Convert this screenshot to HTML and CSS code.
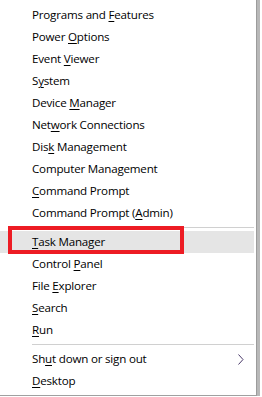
FILE: index.html
```html
<!DOCTYPE html>
<html lang="en">
<head>
    <meta charset="UTF-8">
    <title>Win+X</title>
    <link rel="stylesheet" href="styles.css">
</head>
<body>
    <div class="screen">
        <div class="menu">
            <div class="item">Programs and <u>F</u>eatures</div>
            <div class="item">Power <u>O</u>ptions</div>
            <div class="item">Event <u>V</u>iewer</div>
            <div class="item">S<u>y</u>stem</div>
            <div class="item">Device <u>M</u>anager</div>
            <div class="item">Net<u>w</u>ork Connections</div>
            <div class="item">Dis<u>k</u> Management</div>
            <div class="item">Computer Management</div>
            <div class="item"><u>C</u>ommand Prompt</div>
            <div class="item">Command Prompt (<u>A</u>dmin)</div>
            <div class="sep"></div>
            <div class="item hover">
                <u>T</u>ask Manager
                <span class="mark"></span>
            </div>
            <div class="item">Control <u>P</u>anel</div>
            <div class="item">File <u>E</u>xplorer</div>
            <div class="item"><u>S</u>earch</div>
            <div class="item"><u>R</u>un</div>
            <div class="sep"></div>
            <div class="item sub">
                Sh<u>u</u>t down or sign out
                <svg class="chev" width="6" height="11" viewBox="0 0 6 11">
                    <polyline points="0.5,0.5 5,5.5 0.5,10.5" fill="none" stroke="#4a3a6a" stroke-width="1"/>
                </svg>
            </div>
            <div class="item"><u>D</u>esktop</div>
        </div>
        <div class="edge"></div>
    </div>
</body>
</html>
```

FILE: styles.css
```css
* {
    box-sizing: border-box;
    margin: 0;
    padding: 0;
}

body {
    background-color: #fff;
    font-family: 'Open Sans', 'Noto Sans', sans-serif;
    font-size: 11.6px;
    letter-spacing: -0.2px;
    color: #000;
}

.screen {
    display: flex;
    align-items: flex-start;
}

.menu {
    width: 257px;
    padding: 4px 0 3px 0;
    background-color: #fff;
    border-right: 1px solid #9c9c9c;
    border-bottom: 1px solid #a0a0a0;
}

.edge {
    width: 3px;
    height: 396px;
    background-color: #b8b8b8;
}

.item {
    position: relative;
    height: 22px;
    line-height: 22px;
    padding-left: 32px;
    margin-right: 2px;
    white-space: nowrap;
}

.item u {
    text-decoration-thickness: 1px;
    text-underline-offset: 2px;
}

.hover {
    background-color: #e5e5e5;
}

/* caixa vermelha por cima do item */
.mark {
    position: absolute;
    left: 8px;
    top: -5px;
    width: 176px;
    height: 28px;
    border: 4px solid #ed1c24;
}

.sep {
    height: 1px;
    margin: 3px 2px 3px 32px;
    background-color: #d0d0d0;
}

.chev {
    position: absolute;
    right: 10px;
    top: 6px;
}
```
